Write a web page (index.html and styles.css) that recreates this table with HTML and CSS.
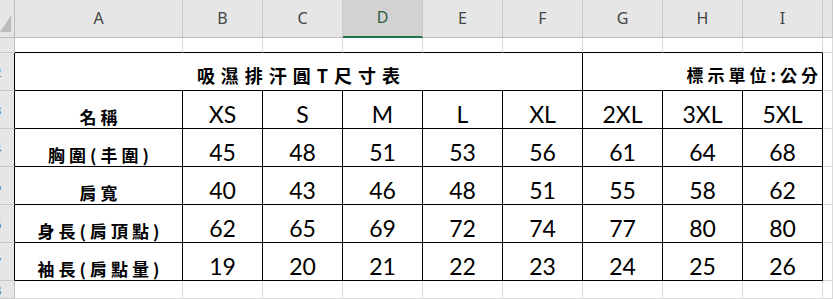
FILE: index.html
```html
<!DOCTYPE html>
<html lang="zh-Hant">
<head>
<meta charset="utf-8">
<link rel="stylesheet" href="styles.css">
</head>
<body>
<div class="sheet">
  <div class="c hdr corner"><svg width="15" height="38" viewBox="0 0 15 38"><polygon points="12,15 12,33 0,33" fill="#bcbcbc"/></svg></div>
  <div class="c hdr">A</div>
  <div class="c hdr">B</div>
  <div class="c hdr">C</div>
  <div class="c hdr sel">D</div>
  <div class="c hdr">E</div>
  <div class="c hdr">F</div>
  <div class="c hdr">G</div>
  <div class="c hdr">H</div>
  <div class="c hdr">I</div>
  <div class="c hdr"></div>

  <div class="c rh"><span>1</span></div>
  <div class="c bb"></div><div class="c bb"></div><div class="c bb"></div><div class="c bb"></div><div class="c bb"></div><div class="c bb"></div><div class="c bb"></div><div class="c bb"></div><div class="c bb"></div>
  <div class="c"></div>

  <div class="c rh br"><span>2</span></div>
  <div class="c bb br title span6">吸濕排汗圓T尺寸表</div>
  <div class="c bb br unit span3">標示單位:公分</div>
  <div class="c"></div>

  <div class="c rh br"><span>3</span></div>
  <div class="c bb br zh">名稱</div>
  <div class="c bb br num">XS</div><div class="c bb br num">S</div><div class="c bb br num">M</div><div class="c bb br num">L</div><div class="c bb br num">XL</div><div class="c bb br num">2XL</div><div class="c bb br num">3XL</div><div class="c bb br num">5XL</div>
  <div class="c"></div>

  <div class="c rh br"><span>4</span></div>
  <div class="c bb br zh">胸圍(丰圍)</div>
  <div class="c bb br num">45</div><div class="c bb br num">48</div><div class="c bb br num">51</div><div class="c bb br num">53</div><div class="c bb br num">56</div><div class="c bb br num">61</div><div class="c bb br num">64</div><div class="c bb br num">68</div>
  <div class="c"></div>

  <div class="c rh br"><span>5</span></div>
  <div class="c bb br zh">肩寬</div>
  <div class="c bb br num">40</div><div class="c bb br num">43</div><div class="c bb br num">46</div><div class="c bb br num">48</div><div class="c bb br num">51</div><div class="c bb br num">55</div><div class="c bb br num">58</div><div class="c bb br num">62</div>
  <div class="c"></div>

  <div class="c rh br"><span>6</span></div>
  <div class="c bb br zh">身長(肩頂點)</div>
  <div class="c bb br num">62</div><div class="c bb br num">65</div><div class="c bb br num">69</div><div class="c bb br num">72</div><div class="c bb br num">74</div><div class="c bb br num">77</div><div class="c bb br num">80</div><div class="c bb br num">80</div>
  <div class="c"></div>

  <div class="c rh br"><span>7</span></div>
  <div class="c bb br zh">袖長(肩點量)</div>
  <div class="c bb br num">19</div><div class="c bb br num">20</div><div class="c bb br num">21</div><div class="c bb br num">22</div><div class="c bb br num">23</div><div class="c bb br num">24</div><div class="c bb br num">25</div><div class="c bb br num">26</div>
  <div class="c"></div>

  <div class="c rh"><span>8</span></div>
  <div class="c"></div><div class="c"></div><div class="c"></div><div class="c"></div><div class="c"></div><div class="c"></div><div class="c"></div><div class="c"></div><div class="c"></div>
  <div class="c"></div>
</div>
</body>
</html>
```

FILE: styles.css
```css
* {
  box-sizing: border-box;
  margin: 0;
  padding: 0;
}

body {
  margin: 0;
  background: #ffffff;
  width: 833px;
  height: 299px;
  overflow: hidden;
}

.sheet {
  display: grid;
  grid-template-columns: 15px 168px repeat(8, 80px) 1fr;
  grid-template-rows: 38px 15px repeat(6, 38px) 18px;
}

.c {
  display: flex;
  align-items: flex-end;
  justify-content: center;
  overflow: hidden;
  white-space: nowrap;
  border-right: 1px solid #dadada;
  border-bottom: 1px solid #dadada;
  color: #000;
}

.hdr {
  background: #e6e6e6;
  border-right: 1px solid #c8c8c8;
  border-bottom: 1px solid #bdbdbd;
  align-items: center;
  font-family: "Noto Sans", sans-serif;
  font-size: 16px;
  color: #444;
  padding-bottom: 2px;
}

.hdr.sel {
  background: #d2d2d2;
  border-bottom: 2px solid #217346;
  color: #2f5e40;
}

.corner {
  align-items: stretch;
  justify-content: flex-start;
  padding: 0;
  border-right-color: #bdbdbd;
}

.rh {
  background: #e6e6e6;
  border-right: 1px solid #bdbdbd;
  border-bottom: 1px solid #c8c8c8;
  justify-content: flex-start;
  align-items: center;
  font-family: "Noto Sans", sans-serif;
  font-size: 13px;
  color: #4a6c94;
}

.rh span {
  margin-left: -6px;
}

.bb {
  border-bottom-color: #000;
}

.br {
  border-right-color: #000;
}

.span6 {
  grid-column: span 6;
}

.span3 {
  grid-column: span 3;
}

.title {
  font-family: "Noto Sans CJK TC", "Noto Sans CJK SC", sans-serif;
  font-weight: 700;
  font-size: 18px;
  line-height: 1;
  letter-spacing: 6px;
  padding-left: 6px;
  padding-bottom: 6px;
}

.unit {
  justify-content: flex-end;
  font-family: "Noto Sans CJK TC", "Noto Sans CJK SC", sans-serif;
  font-weight: 700;
  font-size: 17px;
  line-height: 1;
  letter-spacing: 4px;
  padding-right: 0;
  padding-bottom: 7px;
}

.zh {
  font-family: "Noto Sans CJK TC", "Noto Sans CJK SC", sans-serif;
  font-weight: 700;
  font-size: 17px;
  line-height: 1;
  letter-spacing: 4px;
  padding-left: 4px;
  padding-bottom: 3px;
}

.num {
  font-family: Lato, "Liberation Sans", sans-serif;
  font-size: 23px;
  line-height: 1;
  padding-bottom: 2px;
}
```
